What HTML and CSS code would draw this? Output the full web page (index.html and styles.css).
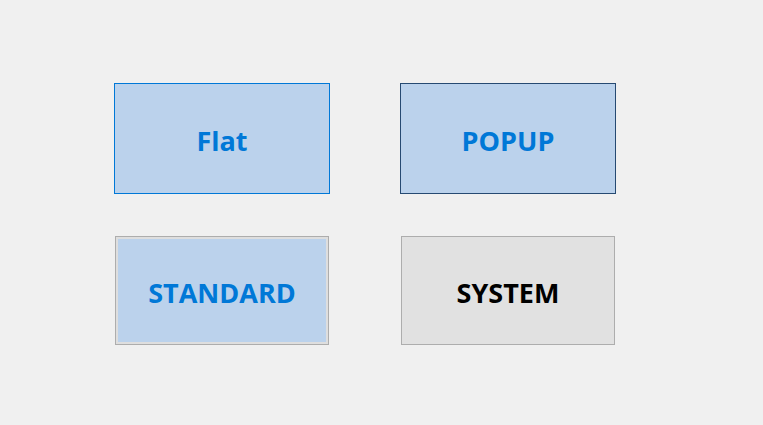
FILE: index.html
```html
<!DOCTYPE html>
<html>
<head>
<meta charset="utf-8">
<link rel="stylesheet" href="styles.css">
</head>
<body>
<div class="grid">
  <div class="cell"><button class="btn flat">Flat</button></div>
  <div class="cell"><button class="btn popup">POPUP</button></div>
  <div class="cell"><button class="btn standard">STANDARD</button></div>
  <div class="cell"><button class="btn system">SYSTEM</button></div>
</div>
</body>
</html>
```
FILE: styles.css
```css
html, body {
  margin: 0;
  background: #f0f0f0;
  width: 763px;
  height: 425px;
  overflow: hidden;
}
.grid {
  display: grid;
  grid-template-columns: 216px 216px;
  grid-auto-rows: 111px;
  column-gap: 70px;
  row-gap: 41px;
  padding: 83px 0 0 114px;
}
.cell {
  display: flex;
}
.btn {
  flex: 1;
  margin: 0;
  padding: 0;
  box-sizing: border-box;
  font-family: "Open Sans", "Noto Sans", sans-serif;
  font-weight: 700;
  font-size: 27px;
  line-height: 1;
  color: #0078d7;
  background: #bbd2ec;
  display: flex;
  align-items: center;
  justify-content: center;
  padding-top: 4px;
}
.flat {
  border: 1px solid #0078d7;
}
.popup {
  border: 1px solid #264a72;
}
.standard {
  margin: 1px;
  border: 1px solid #adadad;
  box-shadow: inset 0 0 0 2px #dedede;
}
.system {
  margin: 1px;
  border: 1px solid #adadad;
  background: #e1e1e1;
  color: #000;
}
```
